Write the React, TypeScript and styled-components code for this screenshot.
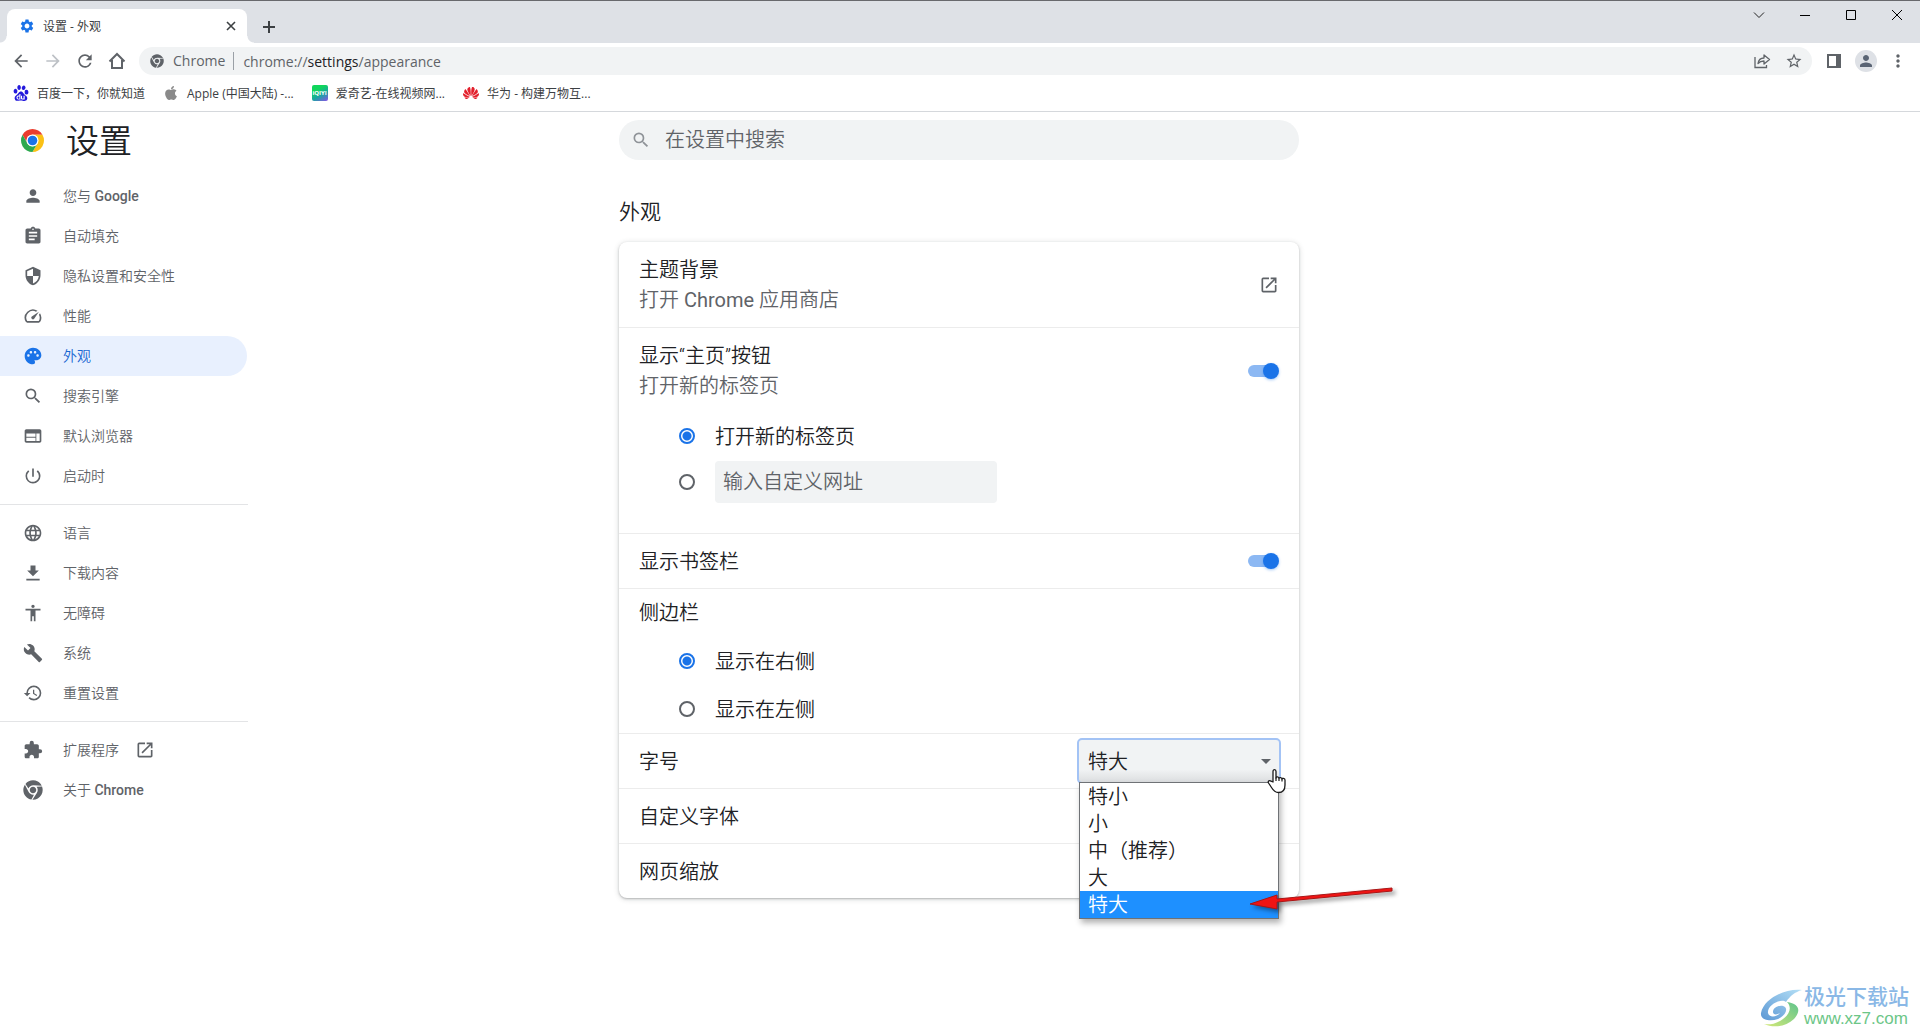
import React, { useState } from "react";
import styled, { createGlobalStyle, css } from "styled-components";
import {
  MdPerson, MdAssignment, MdSecurity, MdSpeed, MdPalette, MdSearch, MdWeb,
  MdPowerSettingsNew, MdLanguage, MdBuild, MdRestore, MdExtension,
  MdOpenInNew, MdSettings, MdArrowBack, MdArrowForward, MdRefresh, MdStarBorder, MdMoreVert,
} from "react-icons/md";
import { FaApple, FaChrome } from "react-icons/fa";
import { SiBaidu, SiHuawei } from "react-icons/si";

const ink = "#202124";
const muted = "#5f6368";
const blue = "#1a73e8";
const line = "#ececec";

const Global = createGlobalStyle`
  *, *::before, *::after { box-sizing: border-box; }
  html { overflow: hidden; }
  body {
    margin: 0;
    background: #fff;
    color: ${ink};
    font-family: Roboto, "Noto Sans CJK SC", sans-serif;
    font-size: 20px;
    font-weight: 350;
  }
  button, input, select { font: inherit; color: inherit; margin: 0; }
`;

const Window = styled.div`
  position: relative;
  display: flex;
  flex-direction: column;
  min-height: 100vh;
  overflow: hidden;
`;

/* ---------- browser frame ---------- */

const Chrome = styled.header`
  font-family: "Open Sans", "Noto Sans CJK SC", sans-serif;
  font-size: 12px;
  font-weight: 400;
  border-bottom: 1px solid #d5d8dc;
`;

const TabStrip = styled.div`
  display: flex;
  align-items: flex-end;
  height: 43px;
  padding-left: 7px;
  background: #dee1e6;
  border-top: 1px solid #68696d;
`;

const Tab = styled.div`
  position: relative;
  display: flex;
  align-items: center;
  gap: 8px;
  width: 240px;
  height: 34px;
  padding: 0 8px 0 12px;
  border-radius: 8px 8px 0 0;
  background: #fff;
  color: #3c4043;
  svg { flex: none; }
  &::before, &::after {
    content: "";
    position: absolute;
    bottom: 0;
    width: 7px;
    height: 7px;
  }
  &::before {
    right: 100%;
    background: radial-gradient(circle at 0 0, transparent 6px, #fff 7px);
  }
  &::after {
    left: 100%;
    background: radial-gradient(circle at 100% 0, transparent 6px, #fff 7px);
  }
`;

const TabTitle = styled.span`
  flex: 1;
`;

const IconButton = styled.button<{ $size?: number; $color?: string }>`
  display: flex;
  align-items: center;
  justify-content: center;
  flex: none;
  width: ${(p) => p.$size ?? 32}px;
  height: ${(p) => p.$size ?? 32}px;
  padding: 0;
  border: 0;
  background: none;
  color: ${(p) => p.$color ?? muted};
`;

const NewTab = styled(IconButton)`
  margin-left: 6px;
`;

const Controls = styled.div`
  display: flex;
  align-self: flex-start;
  margin-left: auto;
`;

const ControlButton = styled.button`
  display: flex;
  align-items: center;
  justify-content: center;
  width: 46px;
  height: 28px;
  padding: 0;
  border: 0;
  background: none;
`;

const Toolbar = styled.div`
  display: flex;
  align-items: center;
  height: 36px;
  padding: 0 6px 0 5px;
`;

const Omnibox = styled.div`
  display: flex;
  align-items: center;
  flex: 1;
  height: 28px;
  margin: 0 6px;
  padding: 0 2px 0 11px;
  border-radius: 14px;
  background: #f1f3f4;
  color: ${muted};
  font-size: 14px;
  > svg { flex: none; }
`;

const Scheme = styled.span`
  margin-left: 9px;
  padding-right: 8px;
  border-right: 1px solid #9aa0a6;
  line-height: 18px;
`;

const Url = styled.div`
  flex: 1;
  padding-left: 9px;
  b { font-weight: 400; color: ${ink}; }
`;

const Avatar = styled.button`
  display: flex;
  align-items: center;
  justify-content: center;
  width: 22px;
  height: 22px;
  margin: 0 5px;
  padding: 0;
  border: 0;
  border-radius: 50%;
  background: #dee1e6;
  color: #5a6474;
`;

const Bookmarks = styled.nav`
  display: flex;
  align-items: center;
  gap: 18px;
  height: 32px;
  padding: 0 12px 4px 13px;
`;

const Bookmark = styled.a`
  display: flex;
  align-items: center;
  gap: 8px;
  color: #3c4043;
  text-decoration: none;
  white-space: nowrap;
`;

/* ---------- settings page ---------- */

const Page = styled.div`
  display: grid;
  grid-template-columns: minmax(248px, 1fr) minmax(0, 680px) minmax(0, 1fr);
  flex: 1;
  padding-right: 2px;
`;

const Sidebar = styled.aside`
  width: 248px;
`;

const Brand = styled.div`
  display: flex;
  align-items: center;
  gap: 22px;
  height: 64px;
  padding: 0 0 8px 21px;
`;

const BrandTitle = styled.h1`
  margin: 0;
  padding-top: 4px;
  font-size: 33px;
  font-weight: 350;
  line-height: 44px;
`;

const MenuGroup = styled.nav`
  & + & {
    margin-top: 8px;
    padding-top: 8px;
    border-top: 1px solid #e3e4e6;
  }
`;

const MenuLabel = styled.span`
  padding-bottom: 2px;
  b { font-weight: 500; }
`;

const MenuItem = styled.a<{ $active?: boolean }>`
  display: flex;
  align-items: center;
  gap: 20px;
  height: 40px;
  margin-right: 1px;
  padding-left: 23px;
  border-radius: 0 20px 20px 0;
  color: ${muted};
  font-size: 14px;
  text-decoration: none;
  svg { flex: none; }
  ${(p) => p.$active && css`
    background: #e8f0fe;
    color: #1967d2;
    svg { color: ${blue}; }
  `}
`;

const Content = styled.main`
  padding-top: 8px;
`;

const SearchBox = styled.label`
  display: flex;
  align-items: center;
  gap: 14px;
  height: 40px;
  padding: 0 12px;
  border-radius: 20px;
  background: #f1f3f4;
  color: #8f9398;
  svg { flex: none; }
`;

const SearchInput = styled.input`
  flex: 1;
  border: 0;
  outline: 0;
  padding: 0;
  background: none;
  &::placeholder { color: ${muted}; opacity: 1; }
`;

const SectionTitle = styled.h2`
  margin: 36px 0 14px;
  font-size: 21px;
  font-weight: 350;
  line-height: 32px;
`;

const Card = styled.section`
  border-radius: 8px;
  background: #fff;
  box-shadow: 0 1px 2px rgba(60, 64, 67, 0.3), 0 1px 5px 1px rgba(60, 64, 67, 0.15);
`;

const Block = styled.div`
  & + & { border-top: 1px solid ${line}; }
`;

const Row = styled.div<{ $tall?: boolean }>`
  display: flex;
  align-items: center;
  justify-content: space-between;
  height: ${(p) => (p.$tall ? 85 : 54)}px;
  padding: 0 20px;
`;

const Label = styled.label`
  padding-bottom: 2px;
`;

const Texts = styled.div`
  line-height: 30px;
`;

const Sub = styled.div`
  color: ${muted};
  b { font-weight: 400; }
`;

const Options = styled.div<{ $bottom?: number }>`
  padding: 0 20px ${(p) => p.$bottom ?? 0}px 60px;
`;

const Option = styled.label<{ $height: number }>`
  display: flex;
  align-items: center;
  gap: 20px;
  height: ${(p) => p.$height}px;
`;

const OptionText = styled.span`
  padding-bottom: 2px;
`;

const SideHeading = styled.div`
  padding: 0 20px;
  line-height: 48px;
`;

const Radio = styled.input`
  appearance: none;
  flex: none;
  width: 16px;
  height: 16px;
  border: 2px solid ${muted};
  border-radius: 50%;
  &:checked {
    border-color: ${blue};
    background: radial-gradient(circle, ${blue} 4px, transparent 5px);
  }
`;

const UrlInput = styled.input`
  width: 282px;
  height: 42px;
  padding: 0 8px;
  border: 0;
  border-radius: 4px;
  background: #f1f3f4;
  &::placeholder { color: ${muted}; opacity: 1; }
`;

const Switch = styled.input`
  appearance: none;
  position: relative;
  flex: none;
  width: 31px;
  height: 16px;
  &::before {
    content: "";
    position: absolute;
    inset: 2px 3px 2px 0;
    border-radius: 6px;
    background: #bdc1c6;
  }
  &::after {
    content: "";
    position: absolute;
    top: 0;
    left: 0;
    width: 16px;
    height: 16px;
    border-radius: 50%;
    background: #fff;
    box-shadow: 0 1px 3px rgba(0, 0, 0, 0.4);
  }
  &:checked::before { background: #8cb8f3; }
  &:checked::after { left: 15px; background: ${blue}; box-shadow: 0 1px 3px rgba(26, 115, 232, 0.4); }
`;

const SelectWrap = styled.div`
  position: relative;
  width: 204px;
  margin-right: -2px;
`;

const Select = styled.select`
  appearance: none;
  display: block;
  width: 100%;
  height: 46px;
  padding: 0 9px 2px;
  border: 2px solid #a3c3f5;
  border-radius: 5px;
  outline: 0;
  background: linear-gradient(#f1f3f4 70%, #dcdee0);
  font-family: "Noto Sans CJK SC", sans-serif;
`;

const Caret = styled.span`
  position: absolute;
  top: 21px;
  right: 10px;
  border: 5px solid transparent;
  border-top-color: ${muted};
  border-bottom: 0;
`;

const Popup = styled.ul`
  position: absolute;
  z-index: 2;
  top: 44px;
  left: 2px;
  right: 2px;
  margin: 0;
  padding: 0;
  border: 1px solid #6f7276;
  background: #fff;
  list-style: none;
  box-shadow: 2px 4px 6px rgba(0, 0, 0, 0.3);
  font-family: "Noto Sans CJK SC", sans-serif;
`;

const PopupItem = styled.li<{ $selected: boolean }>`
  height: 27px;
  padding-left: 8px;
  line-height: 26px;
  background: ${(p) => (p.$selected ? "#1e90ff" : "transparent")};
  color: ${(p) => (p.$selected ? "#fff" : ink)};
`;

const Pointer = styled.svg`
  position: absolute;
  z-index: 3;
  top: 30px;
  left: 190px;
`;

const Arrow = styled.svg`
  position: absolute;
  z-index: 3;
  top: 148px;
  left: 171px;
  filter: drop-shadow(3px 3px 2px rgba(0, 0, 0, 0.4));
`;

const Watermark = styled.div`
  position: absolute;
  right: 11px;
  bottom: 5px;
  display: flex;
  align-items: center;
  gap: 2px;
`;

const MarkText = styled.div`
  font-family: "Liberation Sans", "Noto Sans CJK SC", sans-serif;
  font-weight: 400;
  line-height: 22px;
`;

const MarkName = styled.div`
  color: #8ab8e6;
  font-size: 21px;
  font-weight: 500;
`;

const MarkSite = styled.div`
  color: #6cc687;
  font-size: 17px;
`;

/* ---------- drawings ---------- */

const ChromeLogo = () => (
  <svg width="23" height="23" viewBox="0 0 48 48" aria-hidden="true">
    <path fill="#ea3c2e" d="M24 12H44.78A24 24 0 0 0 3.22 12L13.6 30A12 12 0 0 1 24 12z" />
    <path fill="#fbc116" d="M44.78 12A24 24 0 0 1 24 48L34.39 30A12 12 0 0 0 24 12z" />
    <path fill="#2da94f" d="M24 48A24 24 0 0 1 3.22 12L13.6 30A12 12 0 0 0 34.39 30z" />
    <circle cx="24" cy="24" r="12.5" fill="#fff" />
    <circle cx="24" cy="24" r="10" fill="#1a73e8" />
  </svg>
);

const HomeIcon = () => (
  <svg width="18" height="18" viewBox="0 0 18 18" fill="none" stroke="currentColor" strokeWidth="2" aria-hidden="true">
    <path d="M1.5 9.5L9 2l7.500 7.500M4 8v8h10V8" />
  </svg>
);

const CloseIcon = () => (
  <svg width="10" height="10" viewBox="0 0 10 10" stroke="currentColor" strokeWidth="1.600" aria-hidden="true">
    <path d="M1 1l8 8M9 1L1 9" />
  </svg>
);

const PlusIcon = () => (
  <svg width="14" height="14" viewBox="0 0 14 14" stroke="currentColor" strokeWidth="2" aria-hidden="true">
    <path d="M7 1v12M1 7h12" />
  </svg>
);

const ShareIcon = () => (
  <svg width="18" height="18" viewBox="0 0 18 18" fill="none" stroke="currentColor" strokeWidth="1.300" aria-hidden="true">
    <path d="M2 5v10.500h11.500V13" />
    <path d="M5 11.500C5.500 8 8 6 11 6V3l5.500 4.500L11 12V9C8.500 9 6.500 9.800 5 11.500z" strokeLinejoin="round" />
  </svg>
);

const PanelIcon = () => (
  <svg width="14" height="14" viewBox="0 0 14 14" aria-hidden="true">
    <path fill="currentColor" fillRule="evenodd" d="M0 0h14v14H0zM2 2v10h7V2z" />
  </svg>
);

const DownloadIcon = () => (
  <svg width="20" height="20" viewBox="0 0 24 24" fill="currentColor" aria-hidden="true">
    <path d="M19 9h-4V3H9v6H5l7 7 7-7zM4 19v2h16v-2z" />
  </svg>
);

const AccessibilityIcon = () => (
  <svg width="20" height="20" viewBox="0 0 24 24" fill="currentColor" aria-hidden="true">
    <path d="M12 2c1.100 0 2 .9 2 2s-.9 2-2 2-2-.9-2-2 .9-2 2-2zm9 7h-6v13h-2v-6h-2v6H9V9H3V7h18v2z" />
  </svg>
);

const QiyiBadge = styled.span`
  display: flex;
  align-items: center;
  justify-content: center;
  width: 16px;
  height: 16px;
  border-radius: 2px;
  background: linear-gradient(150deg, #10d65c 30%, #17a7a0 60%, #8c50e8);
  color: #fff;
  font-size: 6px;
  font-weight: 700;
`;

const HandCursor = () => (
  <Pointer width="20" height="26" viewBox="0 0 20 26" aria-hidden="true">
    <path
      d="M6 14V3.500C6 1 9 1 9 3.500V10c0-1.500 3-1.500 3 .5 0-1.500 3-1.200 3 .6 0-1.200 3-1 3 1V17c0 5-2.500 7.500-6.500 7.500C7.500 24.500 6 22 4.500 19.500L1.500 15c-1-2 1.200-3 2.500-1.800z"
      fill="#fff" stroke="#1b1b1b" strokeWidth="1.300" strokeLinejoin="round"
    />
    <path d="M9 9.500V13M12 10.500V13M15 11V13.500" stroke="#1b1b1b" strokeWidth="1.200" />
  </Pointer>
);

const RedArrow = () => (
  <Arrow width="146" height="26" viewBox="0 0 146 26" aria-hidden="true">
    <path d="M2 18L29 9V13L144 2V5L29 16L29 23z" fill="#f01414" stroke="#a91616" strokeWidth="1" />
  </Arrow>
);

const Swirl = () => (
  <svg width="42" height="40" viewBox="0 0 42 40" aria-hidden="true">
    <defs>
      <linearGradient id="swirlTop" x1="0" y1="1" x2="1" y2="0">
        <stop offset="0" stopColor="#5c98d4" />
        <stop offset="1" stopColor="#b4dff6" />
      </linearGradient>
      <linearGradient id="swirlBottom" x1="0" y1="1" x2="1" y2="0">
        <stop offset="0" stopColor="#d4e978" />
        <stop offset="1" stopColor="#5fc48d" />
      </linearGradient>
    </defs>
    <path fill="url(#swirlTop)" d="M42 2C26 0 4 10 1 25c-1 7 9 9 17 6 7-3 10-9 7-12-4-3-12 0-12 5 0 3 4 3 7 1-3 4-11 5-12 0-1-8 13-15 18-11C30 8 35 4 42 2z" />
    <path fill="url(#swirlBottom)" d="M27 14c5 5 3 12-4 17C16 36 9 37 4 36c9 4 22 3 30-5 7-8 6-15-7-17z" />
  </svg>
);

/* ---------- data ---------- */

type Entry = { label: React.ReactNode; icon: React.ReactNode; active?: boolean; external?: boolean };

const menu: Entry[][] = [
  [
    { label: <>您与 <b>Google</b></>, icon: <MdPerson size={20} /> },
    { label: "自动填充", icon: <MdAssignment size={20} /> },
    { label: "隐私设置和安全性", icon: <MdSecurity size={20} /> },
    { label: "性能", icon: <MdSpeed size={20} /> },
    { label: "外观", icon: <MdPalette size={20} />, active: true },
    { label: "搜索引擎", icon: <MdSearch size={20} /> },
    { label: "默认浏览器", icon: <MdWeb size={20} /> },
    { label: "启动时", icon: <MdPowerSettingsNew size={20} /> },
  ],
  [
    { label: "语言", icon: <MdLanguage size={20} /> },
    { label: "下载内容", icon: <DownloadIcon /> },
    { label: "无障碍", icon: <AccessibilityIcon /> },
    { label: "系统", icon: <MdBuild size={20} /> },
    { label: "重置设置", icon: <MdRestore size={20} /> },
  ],
  [
    { label: "扩展程序", icon: <MdExtension size={20} />, external: true },
    { label: <>关于 <b>Chrome</b></>, icon: <FaChrome size={20} /> },
  ],
];

const bookmarks = [
  { label: "百度一下，你就知道", icon: <SiBaidu size={16} color="#2319dc" /> },
  { label: "Apple (中国大陆) -...", icon: <FaApple size={16} color="#8a8a8a" /> },
  { label: "爱奇艺-在线视频网...", icon: <QiyiBadge aria-hidden="true">iQIYI</QiyiBadge> },
  { label: "华为 - 构建万物互...", icon: <SiHuawei size={16} color="#e3202c" /> },
];

const sizes = ["特小", "小", "中（推荐）", "大", "特大"];

export default function App() {
  const [size, setSize] = useState("特大");
  const [home, setHome] = useState("new");
  const [side, setSide] = useState("right");

  return (
    <Window>
      <Global />
      <Chrome>
        <TabStrip>
          <Tab>
            <MdSettings size={16} color={blue} />
            <TabTitle>设置 - 外观</TabTitle>
            <IconButton $size={16} $color="#3c4043" aria-label="关闭标签页"><CloseIcon /></IconButton>
          </Tab>
          <NewTab $color="#3c4043" aria-label="新标签页"><PlusIcon /></NewTab>
          <Controls>
            <ControlButton aria-label="搜索标签页">
              <svg width="12" height="12" viewBox="0 0 12 12" fill="none" stroke="#222"><path d="M1 3.500l5 5 5-5" /></svg>
            </ControlButton>
            <ControlButton aria-label="最小化">
              <svg width="10" height="10" viewBox="0 0 10 10" stroke="#000"><path d="M0 5.500h10" /></svg>
            </ControlButton>
            <ControlButton aria-label="最大化">
              <svg width="10" height="10" viewBox="0 0 10 10" fill="none" stroke="#000"><path d="M.5.5h9v9h-9z" /></svg>
            </ControlButton>
            <ControlButton aria-label="关闭">
              <svg width="10" height="10" viewBox="0 0 10 10" stroke="#000"><path d="M0 0l10 10M10 0L0 10" /></svg>
            </ControlButton>
          </Controls>
        </TabStrip>
        <Toolbar>
          <IconButton aria-label="后退"><MdArrowBack size={20} /></IconButton>
          <IconButton $color="#bdc1c6" aria-label="前进"><MdArrowForward size={20} /></IconButton>
          <IconButton aria-label="重新加载"><MdRefresh size={20} /></IconButton>
          <IconButton aria-label="主页"><HomeIcon /></IconButton>
          <Omnibox>
            <FaChrome size={14} />
            <Scheme>Chrome</Scheme>
            <Url>chrome://<b>settings</b>/appearance</Url>
            <IconButton aria-label="分享"><ShareIcon /></IconButton>
            <IconButton aria-label="收藏"><MdStarBorder size={18} /></IconButton>
          </Omnibox>
          <IconButton aria-label="侧边栏"><PanelIcon /></IconButton>
          <Avatar aria-label="个人资料"><MdPerson size={18} /></Avatar>
          <IconButton aria-label="菜单"><MdMoreVert size={20} /></IconButton>
        </Toolbar>
        <Bookmarks>
          {bookmarks.map((b) => (
            <Bookmark key={b.label} href="#">{b.icon}{b.label}</Bookmark>
          ))}
        </Bookmarks>
      </Chrome>

      <Page>
        <Sidebar>
          <Brand>
            <ChromeLogo />
            <BrandTitle>设置</BrandTitle>
          </Brand>
          {menu.map((group, g) => (
            <MenuGroup key={g}>
              {group.map((item, i) => (
                <MenuItem key={i} href="#" $active={item.active}>
                  {item.icon}
                  <MenuLabel>{item.label}</MenuLabel>
                  {item.external && <MdOpenInNew size={20} style={{ marginLeft: -4 }} />}
                </MenuItem>
              ))}
            </MenuGroup>
          ))}
        </Sidebar>

        <Content>
          <SearchBox>
            <MdSearch size={20} />
            <SearchInput type="search" placeholder="在设置中搜索" aria-label="在设置中搜索" />
          </SearchBox>
          <SectionTitle>外观</SectionTitle>
          <Card>
            <Block>
              <Row $tall>
                <Texts>
                  <div>主题背景</div>
                  <Sub>打开 <b>Chrome</b> 应用商店</Sub>
                </Texts>
                <IconButton $size={20} aria-label="打开 Chrome 应用商店"><MdOpenInNew size={20} /></IconButton>
              </Row>
            </Block>
            <Block>
              <Row $tall>
                <Texts>
                  <label htmlFor="home-button">显示“主页”按钮</label>
                  <Sub>打开新的标签页</Sub>
                </Texts>
                <Switch id="home-button" type="checkbox" role="switch" defaultChecked />
              </Row>
              <Options $bottom={29}>
                <Option $height={46}>
                  <Radio type="radio" name="home" checked={home === "new"} onChange={() => setHome("new")} />
                  <OptionText>打开新的标签页</OptionText>
                </Option>
                <Option $height={45}>
                  <Radio type="radio" name="home" aria-label="自定义网址" checked={home === "url"} onChange={() => setHome("url")} />
                  <UrlInput type="text" placeholder="输入自定义网址" aria-label="输入自定义网址" />
                </Option>
              </Options>
            </Block>
            <Block>
              <Row>
                <Label htmlFor="bookmark-bar">显示书签栏</Label>
                <Switch id="bookmark-bar" type="checkbox" role="switch" defaultChecked />
              </Row>
            </Block>
            <Block>
              <SideHeading>侧边栏</SideHeading>
              <Options>
                <Option $height={48}>
                  <Radio type="radio" name="side" checked={side === "right"} onChange={() => setSide("right")} />
                  <OptionText>显示在右侧</OptionText>
                </Option>
                <Option $height={48}>
                  <Radio type="radio" name="side" checked={side === "left"} onChange={() => setSide("left")} />
                  <OptionText>显示在左侧</OptionText>
                </Option>
              </Options>
            </Block>
            <Block>
              <Row>
                <Label htmlFor="font-size">字号</Label>
                <SelectWrap>
                  <Select id="font-size" value={size} onChange={(e) => setSize(e.target.value)}>
                    {sizes.map((s) => <option key={s}>{s}</option>)}
                  </Select>
                  <Caret />
                  <Popup role="listbox" aria-label="字号">
                    {sizes.map((s) => (
                      <PopupItem key={s} role="option" aria-selected={s === size} $selected={s === size} onClick={() => setSize(s)}>
                        {s}
                      </PopupItem>
                    ))}
                  </Popup>
                  <HandCursor />
                  <RedArrow />
                </SelectWrap>
              </Row>
            </Block>
            <Block><Row><OptionText>自定义字体</OptionText></Row></Block>
            <Block><Row><OptionText>网页缩放</OptionText></Row></Block>
          </Card>
        </Content>
      </Page>

      <Watermark>
        <Swirl />
        <MarkText>
          <MarkName>极光下载站</MarkName>
          <MarkSite>www.xz7.com</MarkSite>
        </MarkText>
      </Watermark>
    </Window>
  );
}
